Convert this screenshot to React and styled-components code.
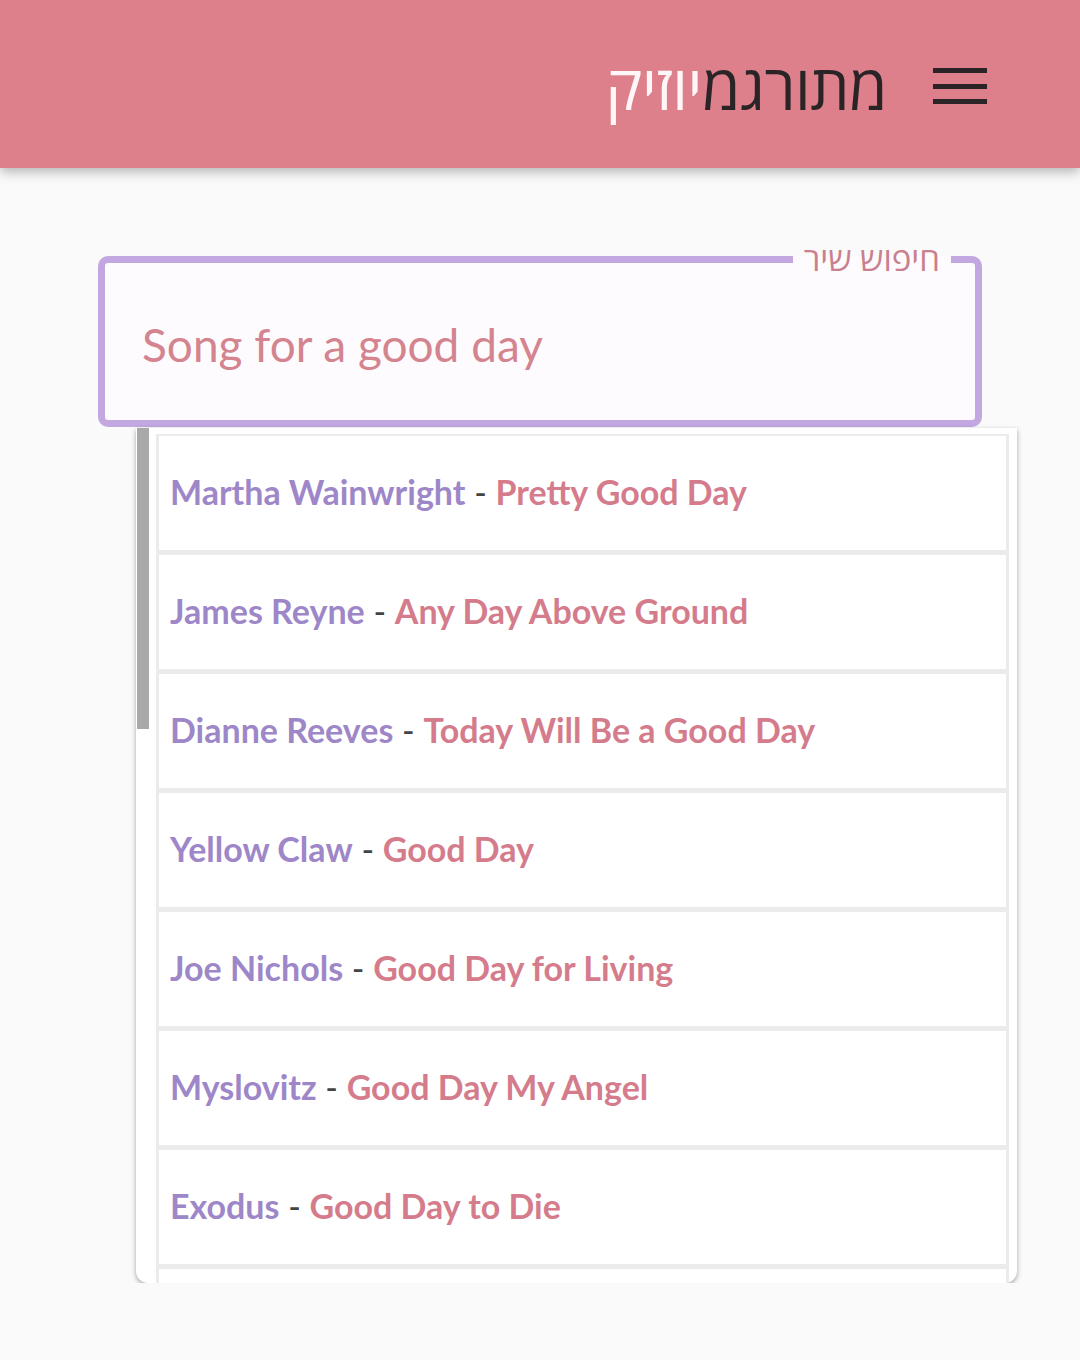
import styled, { createGlobalStyle } from "styled-components";

const GlobalStyle = createGlobalStyle`
  body {
    margin: 0;
    background: #fafafa;
    font-family: Lato, "Open Sans", sans-serif;
  }
`;

const songs = [
  ["Martha Wainwright", "Pretty Good Day"],
  ["James Reyne", "Any Day Above Ground"],
  ["Dianne Reeves", "Today Will Be a Good Day"],
  ["Yellow Claw", "Good Day"],
  ["Joe Nichols", "Good Day for Living"],
  ["Myslovitz", "Good Day My Angel"],
  ["Exodus", "Good Day to Die"],
  ["", ""],
];

const Header = styled.header`
  display: flex;
  flex-direction: row-reverse;
  align-items: center;
  gap: 46px;
  height: 168px;
  padding: 4px 93px 0;
  box-sizing: border-box;
  background: #de808b;
  box-shadow: 0 3px 12px rgba(0, 0, 0, 0.32);
  position: relative;
  z-index: 1;
`;

const Burger = styled.div`
  display: flex;
  flex-direction: column;
  justify-content: space-between;
  width: 54px;
  height: 36px;
`;

const BurgerBar = styled.span`
  display: block;
  height: 5px;
  background: #2b2426;
`;

const Title = styled.h1`
  margin: 0;
  font-family: "Open Sans", "DejaVu Sans", sans-serif;
  font-weight: 400;
  font-size: 62px;
  line-height: 1;
  direction: rtl;
  letter-spacing: -0.5px;
`;

const TitlePart = styled.span`
  color: ${(p) => (p.$light ? "#fff6f7" : "#2b2426")};
`;

const Main = styled.main`
  padding: 72px 98px 0;
`;

const Field = styled.fieldset`
  direction: rtl;
  margin: 0;
  padding: 0 24px 0 37px;
  border: 7px solid #c3a7e1;
  border-radius: 10px;
  background: #fdfbfd;
`;

const Legend = styled.legend`
  padding: 0 11px;
  font-family: "Open Sans", "DejaVu Sans", sans-serif;
  font-size: 33px;
  line-height: 38px;
  color: #c97f8d;
`;

const Value = styled.div`
  direction: ltr;
  display: flex;
  align-items: center;
  height: 142px;
  padding-bottom: 10px;
  box-sizing: border-box;
  font-size: 46px;
  color: #d4848f;
`;

const Dropdown = styled.div`
  display: flex;
  margin: 1px 0 0 38px;
  width: 881px;
  height: 855px;
  background: #fff;
  border-radius: 0 0 12px 12px;
  box-shadow: 0 2px 5px rgba(0, 0, 0, 0.35);
  overflow: hidden;
`;

const Track = styled.div`
  flex: 0 0 19px;
  padding-left: 1px;
`;

const Thumb = styled.div`
  width: 12px;
  height: 301px;
  background: #a9a9a9;
`;

const List = styled.ul`
  flex: 1;
  margin: 0;
  padding: 6px 8px 0 0;
  list-style: none;
`;

const Item = styled.li`
  display: flex;
  align-items: center;
  height: 119px;
  box-sizing: border-box;
  padding: 0 0 4px 11px;
  border: 3px solid #ebebeb;
  border-top-width: 2px;
  font-size: 34px;
  font-weight: 700;
  white-space: pre;
`;

const Artist = styled.span`
  color: #9e87c8;
`;

const Dash = styled.span`
  color: #444;
  font-weight: 400;
`;

const Song = styled.span`
  color: #d57c8c;
`;

export default function App() {
  return (
    <>
      <GlobalStyle />
      <Header>
        <Burger>
          <BurgerBar />
          <BurgerBar />
          <BurgerBar />
        </Burger>
        <Title>
          <TitlePart>מתורגמ</TitlePart>
          <TitlePart $light>יוזיק</TitlePart>
        </Title>
      </Header>
      <Main>
        <Field>
          <Legend>חיפוש שיר</Legend>
          <Value>Song for a good day</Value>
        </Field>
        <Dropdown>
          <Track>
            <Thumb />
          </Track>
          <List>
            {songs.map(([artist, song], i) => (
              <Item key={i}>
                {artist && (
                  <>
                    <Artist>{artist}</Artist>
                    <Dash> - </Dash>
                    <Song>{song}</Song>
                  </>
                )}
              </Item>
            ))}
          </List>
        </Dropdown>
      </Main>
    </>
  );
}
